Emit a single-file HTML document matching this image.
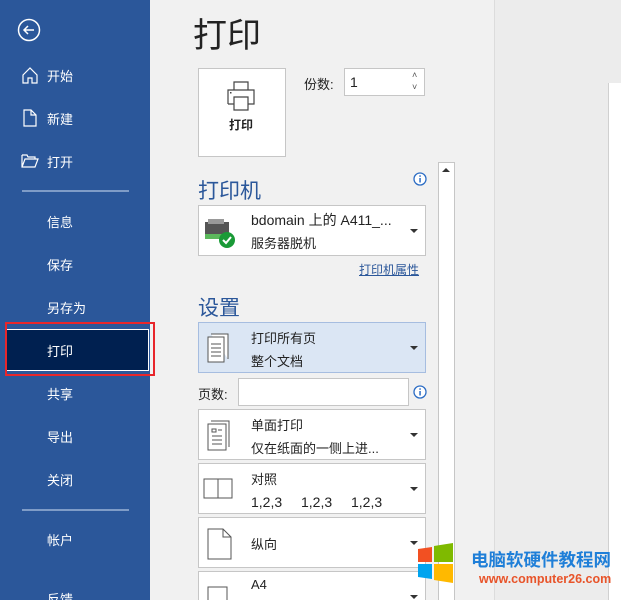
<!DOCTYPE html>
<html style="overflow:hidden;width:621px;height:600px"><head><meta charset="utf-8"><style>
*{margin:0;padding:0;box-sizing:border-box}
body{width:621px;height:600px;overflow:hidden;background:#f1f1f1;font-family:"Liberation Sans","Noto Sans CJK SC",sans-serif;position:relative;font-size:13px;color:#222}
.a{position:absolute}
#side{left:0;top:0;width:150px;height:600px;background:#2b579a;color:#fff;overflow:hidden}
.si{position:absolute;left:47px;font-size:13px;color:#fff}
.hr{position:absolute;left:22px;width:107px;height:2px;background:#7f9cc7}
.box{position:absolute;background:#fff;border:1px solid #c6c6c6}
.dd{position:absolute;left:198px;width:228px;background:#fff;border:1px solid #c6c6c6}
.dd .t1{position:absolute;left:52px;font-size:13px}
.arr{position:absolute;right:7px;width:0;height:0;border-left:4px solid transparent;border-right:4px solid transparent;border-top:4px solid #333}
.h{position:absolute;left:198px;font-size:21px;color:#2b579a}
</style></head><body>
<div id="side" class="a">
<svg class="a" style="left:17px;top:18px" width="24" height="24" viewBox="0 0 24 24"><circle cx="12" cy="12" r="10.5" fill="none" stroke="#fff" stroke-width="1.5"/><path d="M7 12H17M11 8L7 12L11 16" fill="none" stroke="#fff" stroke-width="1.5"/></svg>
<svg class="a" style="left:22px;top:67px" width="16" height="17" viewBox="0 0 16 17"><path d="M1 8L8 1L15 8V16H10V11H6V16H1Z" fill="none" stroke="#fff" stroke-width="1.2"/></svg>
<div class="si" style="top:66px">开始</div>
<svg class="a" style="left:23px;top:109px" width="14" height="18" viewBox="0 0 14 18"><path d="M1 1H8L13 6V17H1Z M8 1V6H13" fill="none" stroke="#fff" stroke-width="1.2"/></svg>
<div class="si" style="top:109px">新建</div>
<svg class="a" style="left:21px;top:154px" width="18" height="14" viewBox="0 0 18 14"><path d="M1 1H6L7 3H14V5 M1 1V13H14L17 5H4L1 13" fill="none" stroke="#fff" stroke-width="1.2"/></svg>
<div class="si" style="top:152px">打开</div>
<div class="hr" style="top:190px"></div>
<div class="si" style="top:212px">信息</div>
<div class="si" style="top:255px">保存</div>
<div class="si" style="top:298px">另存为</div>
<div class="a" style="left:6px;top:329px;width:143px;height:42px;background:#002050;border:1px solid #fff"></div>
<div class="si" style="top:341px">打印</div>
<div class="si" style="top:384px">共享</div>
<div class="si" style="top:427px">导出</div>
<div class="si" style="top:470px">关闭</div>
<div class="hr" style="top:509px"></div>
<div class="si" style="top:530px">帐户</div>
<div class="si" style="top:589px">反馈</div>
</div>
<div class="a" style="left:5px;top:322px;width:150px;height:54px;border:2px solid #e8262b"></div>

<div class="a" style="left:193px;top:8px;font-size:34px;color:#222">打印</div>
<div class="box" style="left:198px;top:68px;width:88px;height:89px"></div>
<svg class="a" style="left:225px;top:80px" width="32" height="32" viewBox="0 0 32 32"><path d="M9 10V2H23V10 M3 24V10H29V24H23 M9 24H3 M9 17H23V30H9Z" fill="#fff" stroke="#444" stroke-width="1.2"/><rect x="5" y="12" width="1.5" height="1.5" fill="#444"/></svg>
<div class="a" style="left:229px;top:116px;font-size:12px;font-weight:bold">打印</div>
<div class="a" style="left:304px;top:74px">份数:</div>
<div class="box" style="left:344px;top:68px;width:81px;height:28px"></div>
<div class="a" style="left:350px;top:74px;font-size:14px">1</div>
<div class="a" style="left:412px;top:70px;font-size:9px;color:#555">˄</div>
<div class="a" style="left:412px;top:82px;font-size:9px;color:#555">˅</div>

<div class="h" style="top:175px">打印机</div>
<svg class="a" style="left:413px;top:172px" width="14" height="14"><circle cx="7" cy="7" r="6" fill="#fff" stroke="#2b6cc4" stroke-width="1.3"/><rect x="6.3" y="6" width="1.5" height="4.5" fill="#2b6cc4"/><rect x="6.3" y="3.3" width="1.5" height="1.5" fill="#2b6cc4"/></svg>
<div class="dd" style="top:205px;height:51px"><div class="t1" style="top:4px;font-size:14px">bdomain 上的 A411_...</div><div class="t1" style="top:27px">服务器脱机</div><div class="arr" style="top:23px"></div>
<svg class="a" style="left:4px;top:10px" width="36" height="34"><rect x="2" y="6" width="24" height="12" fill="#555"/><rect x="5" y="3" width="16" height="5" fill="#999"/><rect x="2" y="18" width="22" height="5" fill="#5cb85c"/><circle cx="24" cy="24" r="8" fill="#1a9a37"/><path d="M20 24L23 27L28 21" stroke="#fff" stroke-width="2" fill="none"/></svg></div>
<div class="a" style="left:359px;top:261px;font-size:12px;color:#2b579a;text-decoration:underline">打印机属性</div>

<div class="h" style="top:292px">设置</div>
<div class="dd" style="top:322px;height:51px;background:#dbe6f4;border-color:#a6bde0"><div class="t1" style="top:5px">打印所有页</div><div class="t1" style="top:28px">整个文档</div><div class="arr" style="top:23px"></div>
<svg class="a" style="left:8px;top:10px" width="22" height="30"><path d="M4 1H21V26 M1 4H17V29H1Z" fill="#fff" stroke="#555"/><path d="M4 11H14M4 15H14M4 19H14M4 23H14" stroke="#555"/></svg></div>
<div class="a" style="left:198px;top:384px">页数:</div>
<div class="box" style="left:238px;top:378px;width:171px;height:28px"></div>
<svg class="a" style="left:413px;top:385px" width="14" height="14"><circle cx="7" cy="7" r="6" fill="#fff" stroke="#2b6cc4" stroke-width="1.3"/><rect x="6.3" y="6" width="1.5" height="4.5" fill="#2b6cc4"/><rect x="6.3" y="3.3" width="1.5" height="1.5" fill="#2b6cc4"/></svg>
<div class="dd" style="top:409px;height:51px"><div class="t1" style="top:5px">单面打印</div><div class="t1" style="top:28px">仅在纸面的一侧上进...</div><div class="arr" style="top:23px"></div>
<svg class="a" style="left:8px;top:10px" width="24" height="32"><path d="M4 1H22V27 M1 4H19V30H1Z" fill="#fff" stroke="#555"/><path d="M5 9H9V12H5Z M11 10H15M5 16H15M5 20H15M5 24H15" stroke="#555" fill="none"/></svg></div>
<div class="dd" style="top:463px;height:51px"><div class="t1" style="top:5px">对照</div><div class="t1" style="top:30px;font-size:14px">1,2,3</div><div class="t1" style="top:30px;left:102px;font-size:14px">1,2,3</div><div class="t1" style="top:30px;left:152px;font-size:14px">1,2,3</div><div class="arr" style="top:23px"></div>
<svg class="a" style="left:4px;top:14px" width="32" height="22"><rect x="1" y="1" width="14" height="19" fill="#fff" stroke="#555"/><rect x="15" y="1" width="14" height="19" fill="#fff" stroke="#555"/></svg></div>
<div class="dd" style="top:517px;height:51px"><div class="t1" style="top:16px">纵向</div><div class="arr" style="top:23px"></div>
<svg class="a" style="left:8px;top:10px" width="26" height="32"><path d="M1 1H16L24 9V31H1Z M16 1V9H24" fill="#fff" stroke="#555"/></svg></div>
<div class="dd" style="top:571px;height:29px;border-bottom:none"><div class="t1" style="top:5px">A4</div><div class="arr" style="top:23px"></div>
<svg class="a" style="left:8px;top:14px" width="22" height="15"><rect x="1" y="1" width="19" height="28" fill="#fff" stroke="#555"/></svg></div>

<div class="a" style="left:438px;top:162px;width:17px;height:438px;background:#fff;border:1px solid #c6c6c6;border-bottom:none"></div>
<div class="a" style="left:442px;top:168px;width:0;height:0;border-left:4px solid transparent;border-right:4px solid transparent;border-bottom:4px solid #333"></div>
<div class="a" style="left:494px;top:0;width:1px;height:600px;background:#dcdcdc"></div>
<div class="a" style="left:495px;top:0;width:126px;height:600px;background:#ececec"></div>
<div class="a" style="left:608px;top:83px;width:13px;height:517px;background:#fff;border-left:1px solid #d0d0d0"></div>

<svg class="a" style="left:417px;top:543px" width="50" height="50"><path d="M1 6L15 4V19H1Z" fill="#f25022"/><path d="M17 3L36 0V19H17Z" fill="#7fba00"/><path d="M1 21H15V36L1 34Z" fill="#00a4ef"/><path d="M17 21H36V40L17 37Z" fill="#ffb900"/></svg>
<div class="a" style="left:471px;top:547px;font-size:17.5px;font-weight:bold;color:#1f7fd8">电脑软硬件教程网</div>
<div class="a" style="left:479px;top:572px;font-size:12.5px;font-weight:bold;color:#e8542a">www.computer26.com</div>
</body></html>
